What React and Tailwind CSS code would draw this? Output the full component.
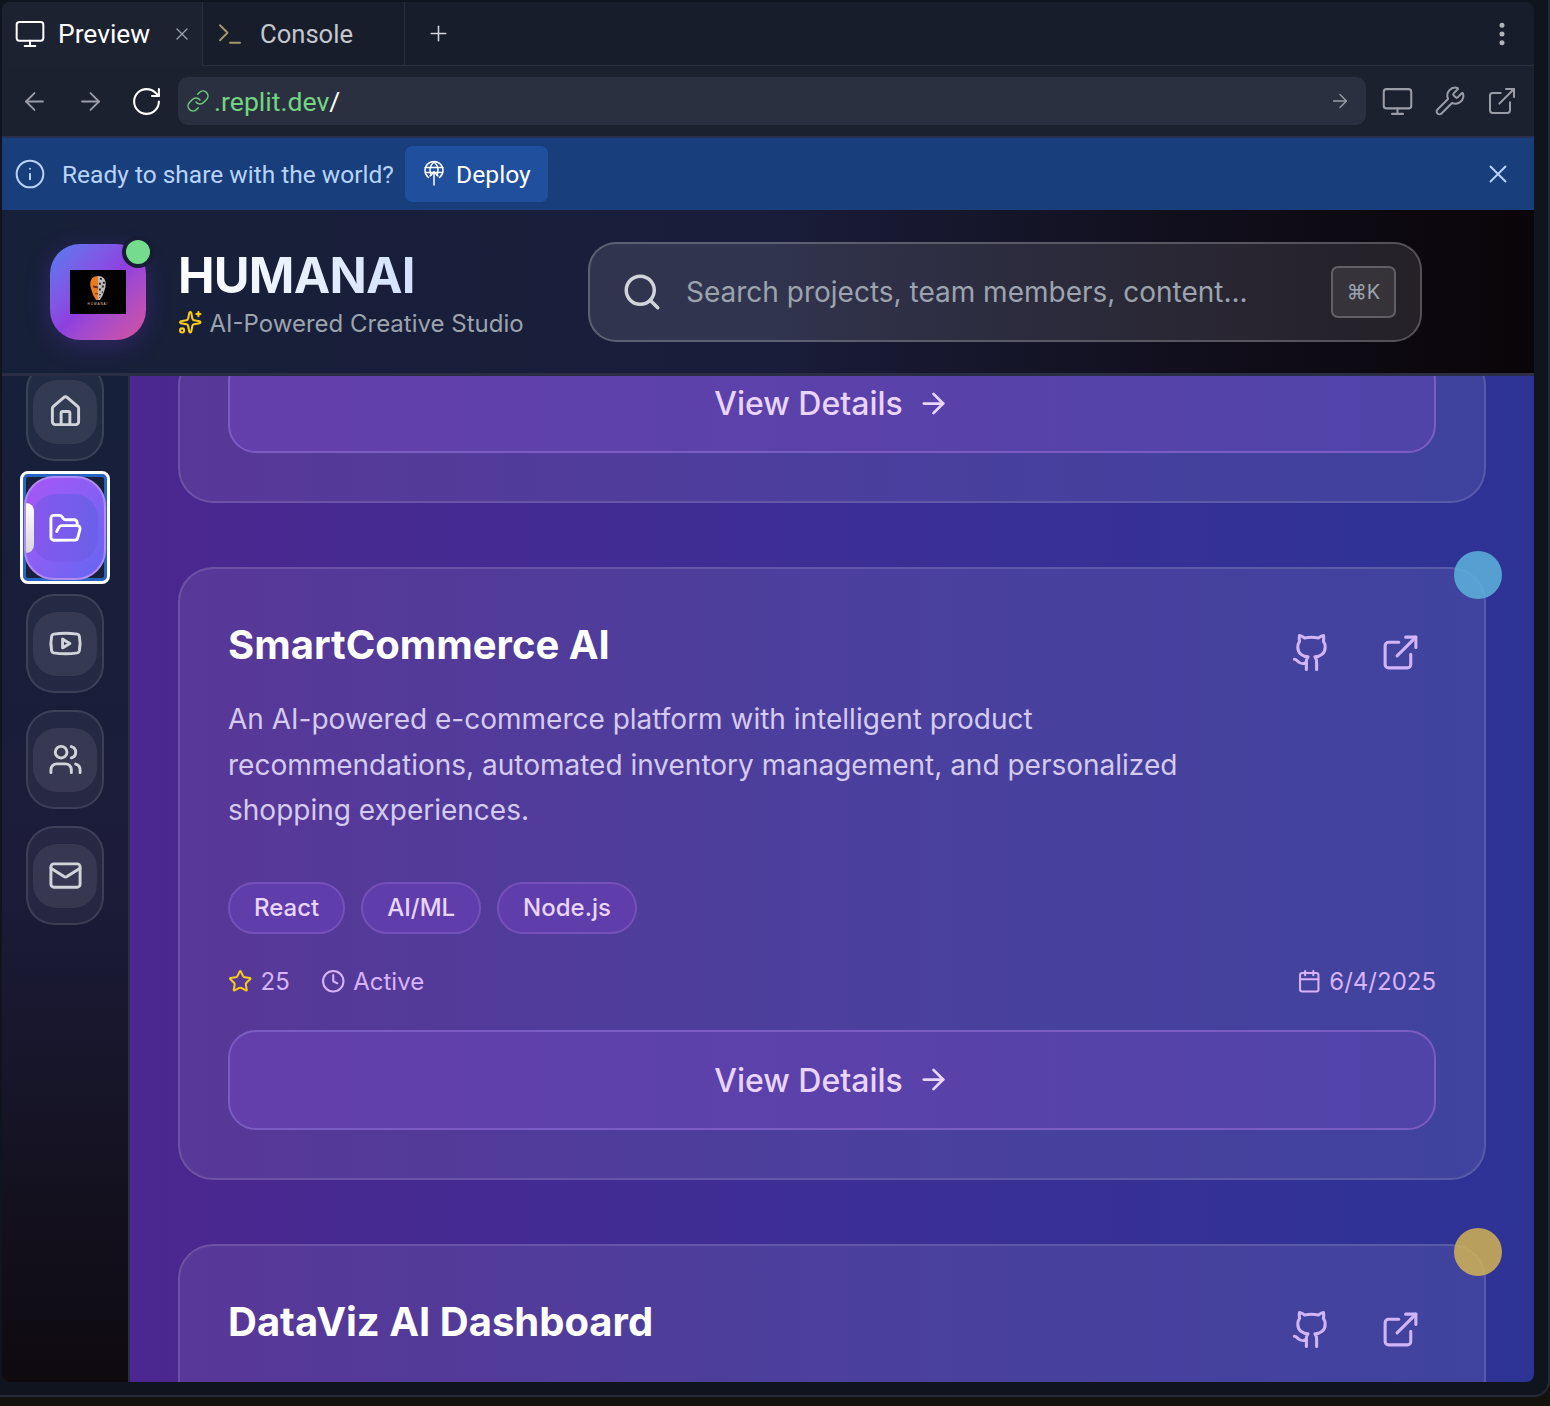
import React from "react";
import {
  ArrowLeft,
  ArrowRight,
  Calendar,
  Clock,
  EllipsisVertical,
  ExternalLink,
  FolderOpen,
  Github,
  House,
  Info,
  Link,
  Mail,
  Monitor,
  Plus,
  RotateCw,
  Search,
  Sparkles,
  Star,
  Terminal,
  Users,
  Wrench,
  X,
  Youtube,
} from "lucide-react";

const navItems = [
  { icon: House },
  { icon: FolderOpen, active: true },
  { icon: Youtube },
  { icon: Users },
  { icon: Mail },
];

const DeployIcon = () => (
  <svg width="24" height="28" viewBox="0 0 24 28" fill="none" stroke="currentColor" strokeWidth="1.5" strokeLinecap="round">
    <path d="M6.5 17.5A9 9 0 1 1 17.5 17.5" />
    <path d="M12 2c-2.5 2.2-4 4.8-4 8 0 2 .5 3.6 1.2 5" />
    <path d="M12 2c2.5 2.2 4 4.8 4 8 0 2-.5 3.6-1.2 5" />
    <path d="M3.2 7.5h17.6" />
    <path d="M3.5 12.5h17" />
    <path d="M12 25V12" />
    <path d="M8 16l4-4 4 4" />
  </svg>
);

const LogoMark = () => (
  <div className="flex h-[44px] w-[56px] flex-col items-center bg-black pt-[5px]">
    <svg width="20" height="26" viewBox="0 0 20 27">
      <path d="M10 1C5 1 2 4 2 9c0 3 .5 4 1 6l2 6 3 5h2z" fill="#ea7a1f" />
      <path d="M5 11l5 1v2l-5-1zM7 19h3v1H7z" fill="#6b2c0a" />
      <path d="M10 1c5 0 8 3 8 8 0 3-.5 4-1 6l-2 6-3 5h-2z" fill="#bdbdbd" />
      <path d="M12 3h2v2h-2zM15 7h2v2h-2zM11 8h2v2h-2zM14 11h2v2h-2zM11 14h2v2h-2zM14 17h1v2h-1zM11 20h2v1h-2zM11 23h1v1h-1z" fill="#222" />
    </svg>
    <span className="mt-[1px] text-[3px] leading-[4px] tracking-[1px] text-[#e8cdb0] [font-family:'Liberation_Sans',sans-serif]">HUMANAI</span>
  </div>
);

const NavItem = ({ icon: Icon, active }) => {
  if (active) {
    return (
      <div className="relative h-[99px] w-[78px]">
        <div className="absolute -inset-x-[6px] -inset-y-[7px] rounded-[8px] border-[3px] border-white bg-[#18203a] shadow-[inset_0_0_0_3px_#2563c4]" />
        <div className="absolute -inset-x-[2px] -top-[2px] -bottom-[3px] flex items-center justify-center overflow-hidden rounded-[30px] border-2 border-[#b28cf0] bg-gradient-to-br from-[#a855f7] to-[#6366f1]">
          <div className="absolute left-0 top-[25px] h-[50px] w-[8px] rounded-r-[8px] bg-gradient-to-b from-white to-[#d8d8de]" />
          <div className="flex h-[68px] w-[66px] items-center justify-center rounded-[24px] bg-gradient-to-r from-[#8558ee] to-[#6a60e8]">
            <Icon size={35} className="text-white" />
          </div>
        </div>
      </div>
    );
  }
  return (
    <div className="flex h-[99px] w-[78px] items-center justify-center rounded-[28px] border-2 border-[#ffffff1c] bg-[#ffffff0d]">
      <div className="flex h-[64px] w-[64px] items-center justify-center rounded-[24px] bg-[#ffffff14]">
        <Icon size={35} className="text-[#d1d5db]" />
      </div>
    </div>
  );
};

const ViewDetails = () => (
  <button className="flex h-[100px] w-full items-center justify-center gap-[14px] rounded-[28px] border-2 border-[#7a5cc2] bg-gradient-to-r from-[#643fab] to-[#5044a9] text-[32px] font-medium text-[#e9d5ff]">
    <span className="pt-[2px]">View Details</span>
    <ArrowRight size={33} />
  </button>
);

const ProjectCard = ({ title, dot, children }) => (
  <div className="relative rounded-[35px] border-2 border-[#ffffff21] bg-gradient-to-r from-[#ffffff14] to-[#ffffff16] p-[48px] h-[613px]">
    <div className={`absolute -right-[18px] -top-[18px] h-[48px] w-[48px] rounded-full ${dot}`} />
    <div className="flex items-start justify-between">
      <div className="flex-1">
        <h3 className="text-[40px] font-bold leading-[56px] text-white">{title}</h3>
        {children}
      </div>
      <div className="flex gap-[18px] text-[#d0b5fb]">
        <div className="p-[15px]"><Github size={41} strokeWidth={1.8} /></div>
        <div className="p-[15px]"><ExternalLink size={41} strokeWidth={1.8} /></div>
      </div>
    </div>
  </div>
);

const App = () => {
  return (
    <div className="h-[1406px] w-[1550px] overflow-hidden bg-[#14120f] [font-family:Inter,sans-serif]">
      <div className="h-[1397px] rounded-br-[16px] border-b-2 border-r-2 border-[#262a38] bg-[#10141f] pl-[2px] pr-[14px] pt-[2px]">
        <div className="flex h-[1380px] flex-col overflow-hidden rounded-[8px]">
          {/* Tabs */}
          <div className="flex h-[64px] shrink-0 bg-[#181d2b] [font-family:Roboto,sans-serif]">
            <div className="flex w-[200px] items-center bg-[#1d2230] pl-[12px] text-[#ffffff]">
              <Monitor size={32} strokeWidth={1.5} />
              <span className="ml-[12px] pt-[2px] text-[26.4px]">Preview</span>
              <X size={20} strokeWidth={1.5} className="ml-[22px] text-[#9ca3af]" />
            </div>
            <div className="flex w-[203px] items-center border-b border-l border-r border-[#2b3040] pl-[12px] text-[#c4c7ce]">
              <Terminal size={30} strokeWidth={1.5} className="text-[#a4986e]" />
              <span className="ml-[15px] pt-[2px] text-[25.6px]">Console</span>
            </div>
            <div className="flex flex-1 items-center justify-between border-b border-[#2b3040] pl-[21px] pr-[17px] text-[#d1d5db]">
              <Plus size={25} strokeWidth={1.5} />
              <EllipsisVertical size={30} className="text-[#b0b3ba]" />
            </div>
          </div>

          {/* Url bar */}
          <div className="flex h-[70px] shrink-0 items-center bg-[#1c2130] pl-[18px] pr-[16px] text-[#9a9da6]">
            <ArrowLeft size={29} strokeWidth={1.5} />
            <ArrowRight size={29} strokeWidth={1.5} className="ml-[27px]" />
            <RotateCw size={33} strokeWidth={1.5} className="ml-[25px] text-white" />
            <div className="ml-[15px] flex h-[48px] w-[1188px] items-center rounded-[10px] bg-[#2b3040] pl-[8px] pr-[15px] text-[26.6px] [font-family:Roboto,sans-serif]">
              <Link size={24} strokeWidth={1.5} className="text-[#6fcf7f]" />
              <span className="ml-[4px] pt-[2px] text-[#73d481]">.replit.dev</span>
              <span className="pt-[2px] text-white">/</span>
              <ArrowRight size={22} strokeWidth={1.5} className="ml-auto" />
            </div>
            <Monitor size={33} strokeWidth={1.5} className="ml-[15px]" />
            <Wrench size={32} strokeWidth={1.5} className="ml-[20px]" />
            <ExternalLink size={32} strokeWidth={1.5} className="ml-[20px]" />
          </div>

          {/* Deploy banner */}
          <div className="flex h-[74px] shrink-0 items-center border-t-2 border-[#2a3150] bg-[#183e7c] pl-[12px] pr-[21px] text-[#b8d4fb] [font-family:Roboto,sans-serif]">
            <Info size={32} strokeWidth={1.5} />
            <span className="ml-[16px] pt-[2px] text-[24.5px]">Ready to share with the world?</span>
            <button className="ml-[11px] flex h-[56px] w-[143px] items-center justify-center gap-[10px] rounded-[7px] bg-[#1f4f9d] text-[24.7px] text-white">
              <DeployIcon />
              <span className="pt-[2px]">Deploy</span>
            </button>
            <X size={30} strokeWidth={1.5} className="ml-auto" />
          </div>

          {/* App header */}
          <header className="flex h-[166px] shrink-0 items-center border-b-[3px] border-[#2a2d44] bg-gradient-to-r from-[#172039] via-[#1a1d3a] to-[#0a0508] pl-[48px]">
            <div className="relative">
              <div className="flex h-[96px] w-[96px] items-center justify-center rounded-[30px] bg-gradient-to-br from-[#4f7bf0] via-[#8f3fe0] to-[#d8509c] shadow-[0_6px_24px_#7c3aed40]">
                <LogoMark />
              </div>
              <div className="absolute -right-[8px] -top-[8px] h-[32px] w-[32px] rounded-full border-[4px] border-[#171d35] bg-[#74dc8c]" />
            </div>
            <div className="ml-[32px] w-[346px]">
              <h1 className="bg-gradient-to-r from-white to-[#bfd3fd] bg-clip-text text-[49px] font-bold leading-[62px] tracking-[-0.8px] text-transparent">HUMANAI</h1>
              <div className="flex items-center whitespace-nowrap">
                <Sparkles size={24.5} className="shrink-0 text-[#facc15]" />
                <span className="ml-[7px] pt-[2px] text-[24px] leading-[30px] text-[#9ca3af]">AI-Powered Creative Studio</span>
              </div>
            </div>
            <div className="ml-[64px] flex h-[100px] w-[834px] items-center rounded-[28px] border-2 border-[#ffffff38] bg-[#ffffff1a] pl-[31px] pr-[24px]">
              <Search size={42} strokeWidth={2} className="text-[#d1d5db]" />
              <span className="ml-[23px] text-[28px] text-[#9ca3af]">Search projects, team members, content...</span>
              <div className="ml-auto flex h-[52px] w-[65px] items-center justify-center rounded-[7px] border-2 border-[#ffffff38] bg-[#ffffff14] text-[20px] text-[#9ca3af]">⌘K</div>
            </div>
          </header>

          <div className="flex min-h-0 flex-1">
            {/* Sidebar */}
            <aside className="w-[128px] shrink-0 overflow-hidden border-r-2 border-[#2d2d45] bg-gradient-to-b from-[#16203a] via-[#1c1c3a] to-[#0f0a10]">
              <div className="-mt-[14px] flex flex-col items-center gap-[17px]">
                {navItems.map((item, i) => (
                  <NavItem key={i} icon={item.icon} active={item.active} />
                ))}
              </div>
            </aside>

            {/* Projects */}
            <main className="min-w-0 flex-1 overflow-hidden bg-gradient-to-r from-[#4b278f] via-[#3c2e95] to-[#2d3395] px-[48px]">
              <div className="-mt-[25px] flex flex-col gap-[64px]">
                <div className="rounded-[35px] border-2 border-[#ffffff21] bg-[#ffffff14] px-[48px] pb-[48px]">
                  <ViewDetails />
                </div>

                <ProjectCard title="SmartCommerce AI" dot="bg-[#5cb3dc]/85">
                  <p className="mt-[24px] max-w-[1000px] text-[28px] leading-[45.5px] text-[#d5cbf0]">
                    An AI-powered e-commerce platform with intelligent product recommendations, automated inventory management, and personalized shopping experiences.
                  </p>
                  <div className="mr-[-160px]">
                    <div className="mt-[48px] flex gap-[16px]">
                      {["React", "AI/ML", "Node.js"].map((tag) => (
                        <span key={tag} className="flex h-[52px] items-center rounded-full border-2 border-[#7550b8] bg-[#5f3dab] px-[24px] text-[24px] font-medium text-[#e9d5ff]">{tag}</span>
                      ))}
                    </div>
                    <div className="mt-[30px] flex h-[35px] items-center text-[24px] text-[#d8b4fe]">
                      <Star size={24.5} className="text-[#facc15]" />
                      <span className="ml-[8px] pt-[2px]">25</span>
                      <Clock size={24.5} className="ml-[31px]" />
                      <span className="ml-[8px] pt-[2px]">Active</span>
                      <Calendar size={24.5} className="ml-auto" />
                      <span className="ml-[8px] pt-[2px]">6/4/2025</span>
                    </div>
                    <div className="mt-[31px]">
                      <ViewDetails />
                    </div>
                  </div>
                </ProjectCard>

                <ProjectCard title="DataViz AI Dashboard" dot="bg-[#d1b355]/85" />
              </div>
            </main>
          </div>
        </div>
      </div>
    </div>
  );
};

export default App;
